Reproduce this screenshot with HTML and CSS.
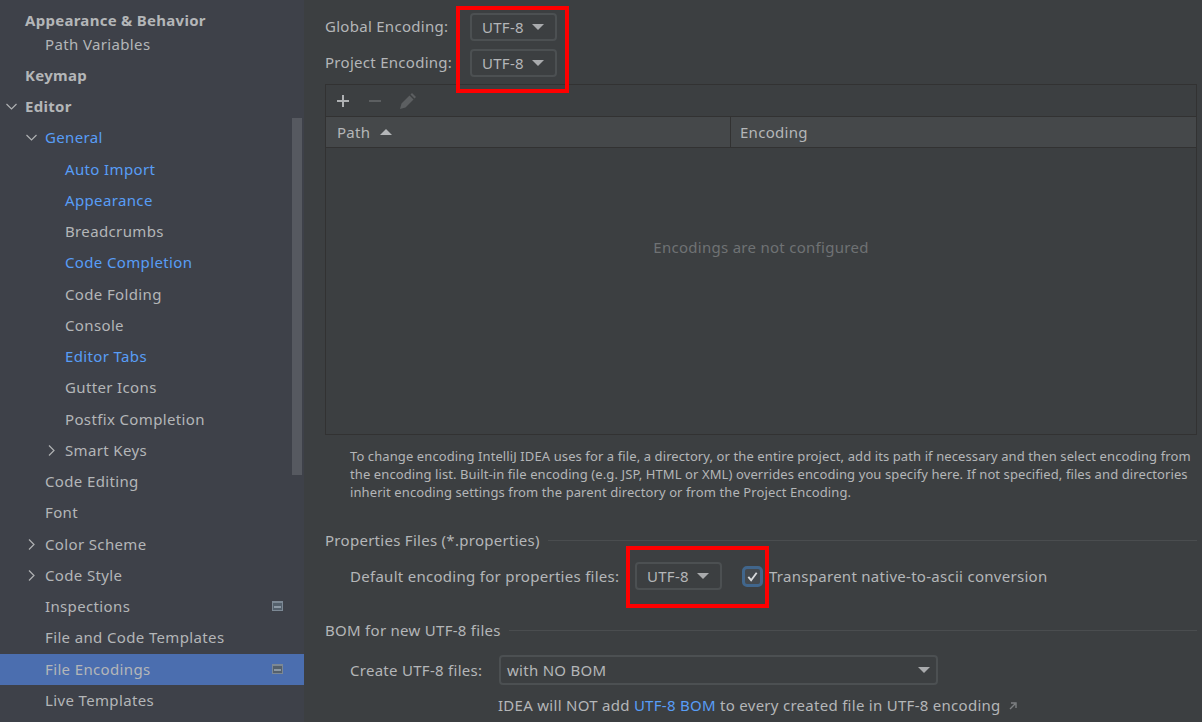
FILE: index.html
```html
<!DOCTYPE html>
<html>
<head>
<meta charset="utf-8">
<title>File Encodings</title>
<link rel="stylesheet" href="styles.css">
</head>
<body>
<div class="side">
	<div class="thumb"></div>
	<div class="item top bold l1 first">Appearance &amp; Behavior</div>
	<div class="item sub l2">Path Variables</div>
	<div class="item bold l1">Keymap</div>
	<div class="item bold l1"><svg class="arrow" viewBox="0 0 11 11"><path d="M.5 3l5 5 5-5"/></svg>Editor</div>
	<div class="item l2 blue"><svg class="arrow" viewBox="0 0 11 11"><path d="M.5 3l5 5 5-5"/></svg>General</div>
	<div class="item l3 blue">Auto Import</div>
	<div class="item l3 blue">Appearance</div>
	<div class="item l3">Breadcrumbs</div>
	<div class="item l3 blue">Code Completion</div>
	<div class="item l3">Code Folding</div>
	<div class="item l3">Console</div>
	<div class="item l3 blue">Editor Tabs</div>
	<div class="item l3">Gutter Icons</div>
	<div class="item l3">Postfix Completion</div>
	<div class="item l3"><svg class="arrow" viewBox="0 0 11 11"><path d="M3 .5l5 5-5 5"/></svg>Smart Keys</div>
	<div class="item l2">Code Editing</div>
	<div class="item l2">Font</div>
	<div class="item l2"><svg class="arrow" viewBox="0 0 11 11"><path d="M3 .5l5 5-5 5"/></svg>Color Scheme</div>
	<div class="item l2"><svg class="arrow" viewBox="0 0 11 11"><path d="M3 .5l5 5-5 5"/></svg>Code Style</div>
	<div class="item l2">Inspections<span class="proj"></span></div>
	<div class="item l2">File and Code Templates</div>
	<div class="item l2 sel">File Encodings<span class="proj"></span></div>
	<div class="item l2">Live Templates</div>
</div>

<div class="main">
	<div class="enc-row"><span class="lbl">Global Encoding:</span><div class="combo">UTF-8<i class="tri"></i></div></div>
	<div class="enc-row"><span class="lbl">Project Encoding:</span><div class="combo">UTF-8<i class="tri"></i></div></div>

	<div class="table">
		<div class="tools">
			<svg class="tool" viewBox="0 0 16 16"><path d="M2 8h12M8 2v12" stroke="#afb1b3" stroke-width="2"/></svg>
			<svg class="tool" viewBox="0 0 16 16"><path d="M2 8h12" stroke="#5c5f61" stroke-width="2"/></svg>
			<svg class="tool pencil" viewBox="0 0 18 18"><path d="M1 17l1.500-5.500 8-8 4 4-8 8zM11.500 2.500l1.500-1.500 4 4-1.500 1.500z" fill="#5c5f61"/></svg>
		</div>
		<div class="thead">
			<div class="th path">Path<i class="tri up"></i></div>
			<div class="th">Encoding</div>
		</div>
		<div class="tbody">Encodings are not configured</div>
	</div>

	<p class="info">To change encoding IntelliJ IDEA uses for a file, a directory, or the entire project, add its path if necessary and then select encoding from the encoding list. Built-in file encoding (e.g. JSP, HTML or XML) overrides encoding you specify here. If not specified, files and directories inherit encoding settings from the parent directory or from the Project Encoding.</p>

	<div class="section"><span>Properties Files (*.properties)</span></div>
	<div class="form-row props">
		<span class="lbl">Default encoding for properties files:</span>
		<div class="combo">UTF-8<i class="tri"></i></div>
		<span class="check"><svg viewBox="0 0 14 14"><path d="M2.500 7.500l3 3.500 6-8" fill="none" stroke="#d8dadc" stroke-width="2"/></svg></span>
		<span>Transparent native-to-ascii conversion</span>
	</div>

	<div class="section bom"><span>BOM for new UTF-8 files</span></div>
	<div class="form-row create">
		<span class="lbl">Create UTF-8 files:</span>
		<div class="combo wide">with NO BOM<i class="tri"></i></div>
	</div>
	<div class="note">IDEA will NOT add <a>UTF-8 BOM</a> to every created file in UTF-8 encoding<svg class="ext" viewBox="0 0 10 10"><path d="M2 8l5-5M3 2h5v5" fill="none" stroke="#7d8082" stroke-width="1.400"/></svg></div>
</div>

<div class="mark mark-a"></div>
<div class="mark mark-b"></div>
</body>
</html>
```

FILE: styles.css
```css
*{margin:0; padding:0; box-sizing:border-box;}
html,body{height:722px; overflow:hidden;}
body{position:relative; display:flex; background:#3c3f41; color:#b4b6b8; font:15px/20px "Noto Sans","Open Sans",sans-serif; letter-spacing:.28px;}

/* left tree */
.side{position:relative; flex:0 0 304px; height:722px; background:#3e4149; padding-top:9.8px; letter-spacing:.36px;}
.thumb{position:absolute; left:292px; top:118px; width:10px; height:357px; background:#565960;}
.item{position:relative; height:31.25px; line-height:31px; white-space:nowrap;}
.first{height:24px; line-height:20px;}
.sub{height:24px; line-height:20px; margin-bottom:2px;}
.bold{font-weight:700; letter-spacing:.28px;}
.l1{padding-left:25px;}
.l2{padding-left:45px;}
.l3{padding-left:65px;}
.blue{color:#589df6;}
.sel{background:#4b6eaf;}
.arrow{position:absolute; top:10px; width:11px; height:11px; margin-left:-19px; fill:none; stroke:#afb1b3; stroke-width:1.2;}
.proj{position:absolute; left:272px; top:10px; width:11px; height:10px; border:1px solid #7c8894; border-top-width:2px; background:#54606c;}
.proj:after{content:''; display:block; width:7px; height:2px; margin:3px 1px 0; background:#8c98a4;}

/* right pane */
.main{flex:1; padding:13px 5px 0 21px; min-width:0;}
.enc-row{display:flex; align-items:center; height:28px; margin-bottom:8px;}
.enc-row .lbl{width:145px; margin-top:-3px;}
.combo{display:flex; align-items:center; justify-content:space-between; width:87px; height:28px; padding:0 11px 0 10px; border:2px solid #4c5052; border-radius:4px; background:#3c3f41;}
.tri{width:0; height:0; border-left:6px solid transparent; border-right:6px solid transparent; border-top:6px solid #a9abad;}
.tri.up{border-top:0; border-bottom:6px solid #b4b6b8; margin-left:10px;}

.table{width:872px; height:351px; margin-top:-1px; border:1px solid #323232; display:flex; flex-direction:column;}
.tools{display:flex; align-items:center; gap:16px; height:32px; padding-left:9px; border-bottom:1px solid #323232;}
.tool{width:16px; height:16px;}
.tool.pencil{width:18px; height:18px;}
.thead{display:flex; height:31px; background:#45484a; border-bottom:1px solid #323232;}
.th{display:flex; align-items:center; flex:1; padding-left:9px;}
.th.path{flex:0 0 405px; padding-left:11px; border-right:1px solid #323232;}
.tbody{flex:1; display:flex; align-items:center; justify-content:center; color:#6f7274; padding-bottom:88px;}

.info{margin:12px 0 0 25px; width:850px; font-size:13px; line-height:18px; letter-spacing:.1px;}
.section{display:flex; align-items:center; gap:8px; margin-top:29px; height:20px;}
.section:after{content:''; flex:1; height:1px; background:#4a4d4f;}
.section.bom{margin-top:30px;}
.form-row{display:flex; align-items:center; padding-left:25px;}
.props{margin-top:12px;}
.props .lbl{width:285px;}
.check{display:flex; align-items:center; justify-content:center; width:21px; height:21px; margin:0 6px 0 20px; border:3px solid #41668c; border-radius:5px; background:#44494e;}
.check svg{width:13px; height:13px; flex:none;}
.create{margin-top:15px;}
.create .lbl{width:149px;}
.combo.wide{width:439px; height:30px; padding:0 6px 0 6px;}
.note{margin:10px 0 0 173px; white-space:nowrap;}
.note a{color:#589df6;}
.ext{width:10px; height:10px; margin-left:7px;}

/* red annotation boxes */
.mark{position:absolute; border:4px solid #f00;}
.mark-a{left:456px; top:6px; width:113px; height:87px;}
.mark-b{left:626px; top:546px; width:143px; height:62px;}
```
